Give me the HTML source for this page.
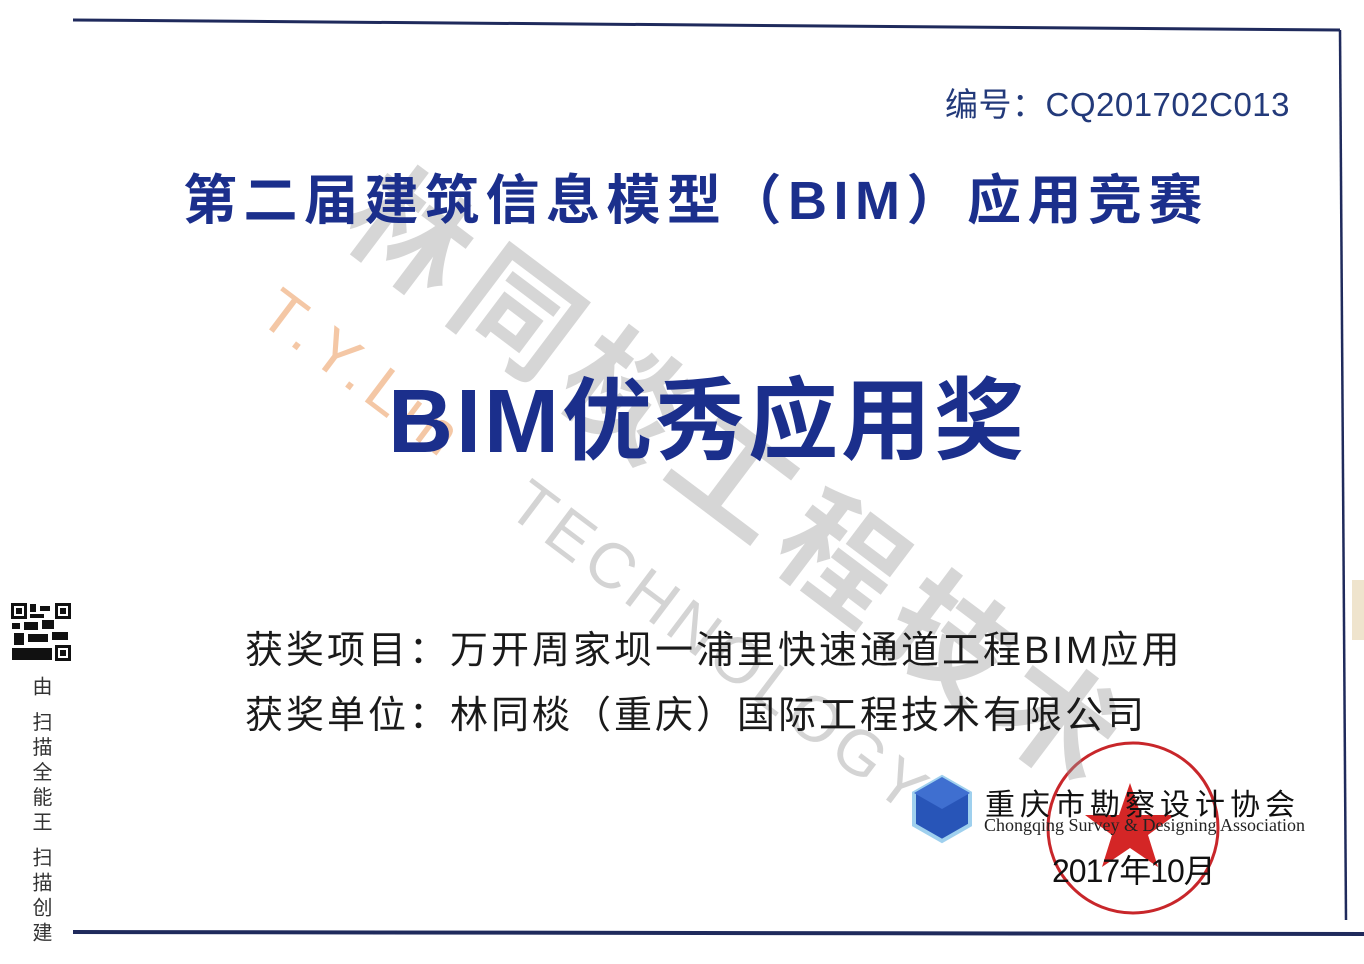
<!DOCTYPE html>
<html><head><meta charset="utf-8"><style>
*{margin:0;padding:0}
body{width:1364px;height:964px;background:#fff;position:relative;overflow:hidden;font-family:"Liberation Sans","Noto Sans CJK SC",sans-serif}
.a{position:absolute;white-space:nowrap}
.blue{color:#1b2f8c;font-weight:bold}
</style></head><body>
<svg class="a" style="left:0;top:0" width="1364" height="964">
<line x1="73" y1="20" x2="1340" y2="30" stroke="#1f2a5c" stroke-width="3"/>
<line x1="1340" y1="30" x2="1346" y2="920" stroke="#1f2a5c" stroke-width="2.5"/>
<line x1="73" y1="932" x2="1364" y2="934" stroke="#1f2a5c" stroke-width="4"/>
<rect x="1352" y="580" width="12" height="60" fill="#e8d8b8" opacity=".7"/>
<circle cx="1133" cy="828" r="85" fill="none" stroke="#c8262a" stroke-width="3"/>
<polygon points="1130,783 1141,815 1175,815 1148,835 1158,867 1130,848 1102,867 1112,835 1085,815 1119,815" fill="#d42626"/>
<polygon points="942,777 970,793 970,825 942,841 914,825 914,793" fill="#2855b8" stroke="#9fd0ee" stroke-width="4"/>
<polygon points="942,777 970,793 942,809 914,793" fill="#3f6fd0"/>
<g fill="#111">
<rect x="11" y="603" width="60" height="58" fill="#fff"/>
<rect x="11" y="603" width="16" height="16"/><rect x="14" y="606" width="10" height="10" fill="#fff"/><rect x="16" y="608" width="6" height="6"/>
<rect x="55" y="603" width="16" height="16"/><rect x="58" y="606" width="10" height="10" fill="#fff"/><rect x="60" y="608" width="6" height="6"/>
<rect x="55" y="645" width="16" height="16"/><rect x="58" y="648" width="10" height="10" fill="#fff"/><rect x="60" y="650" width="6" height="6"/>
<rect x="30" y="604" width="6" height="8"/><rect x="40" y="606" width="10" height="5"/><rect x="12" y="623" width="8" height="6"/><rect x="24" y="622" width="14" height="8"/><rect x="42" y="620" width="12" height="9"/><rect x="14" y="633" width="10" height="12"/><rect x="28" y="634" width="20" height="8"/><rect x="52" y="632" width="16" height="8"/><rect x="12" y="648" width="40" height="12"/><rect x="30" y="614" width="14" height="4"/>
</g>
</svg>
<div class="a" style="left:0;top:0;width:1364px;height:964px;pointer-events:none">
<div class="a" style="left:420px;top:120px;transform:rotate(37deg);transform-origin:left top;font-size:120px;color:#9a9a9a;opacity:.4;font-weight:bold;letter-spacing:15px">林同棪工程技术</div>
<div class="a" style="left:290px;top:275px;transform:rotate(37deg);transform-origin:left top;font-size:62px;color:#f0b080;opacity:.7;letter-spacing:8px">T.Y.Lin</div>
<div class="a" style="left:540px;top:465px;transform:rotate(37deg);transform-origin:left top;font-size:64px;color:#aaa;opacity:.5;letter-spacing:6px">TECHNOLOGY</div>
</div>
<div class="a" style="left:945px;top:78px;font-size:33px;color:#233a7a;letter-spacing:0.5px">编号：CQ201702C013</div>
<div class="a blue" style="left:183px;top:166px;font-size:54px;letter-spacing:6.5px;line-height:70px">第二届建筑信息模型（BIM）应用竞赛</div>
<div class="a blue" style="left:388px;top:370px;font-size:90px;letter-spacing:3px;line-height:105px">BIM优秀应用奖</div>
<div class="a" style="left:245px;top:626px;font-size:38px;letter-spacing:3px;color:#1a1a1a;line-height:50px">获奖项目：万开周家坝一浦里快速通道工程BIM应用</div>
<div class="a" style="left:245px;top:691px;font-size:38px;letter-spacing:3px;color:#1a1a1a;line-height:50px">获奖单位：林同棪（重庆）国际工程技术有限公司</div>
<div class="a" style="left:985px;top:780px;font-size:30px;color:#111;letter-spacing:5px">重庆市勘察设计协会</div>
<div class="a" style="left:984px;top:815px;font-size:18px;color:#222;font-family:'Liberation Serif',serif">Chongqing Survey &amp; Designing Association</div>
<div class="a" style="left:1052px;top:846px;font-size:32px;color:#111;letter-spacing:-1px">2017年10月</div>
<div class="a" style="left:26px;top:676px;font-size:20px;color:#333;writing-mode:vertical-rl;letter-spacing:5px">由 扫描全能王 扫描创建</div>
</body></html>
